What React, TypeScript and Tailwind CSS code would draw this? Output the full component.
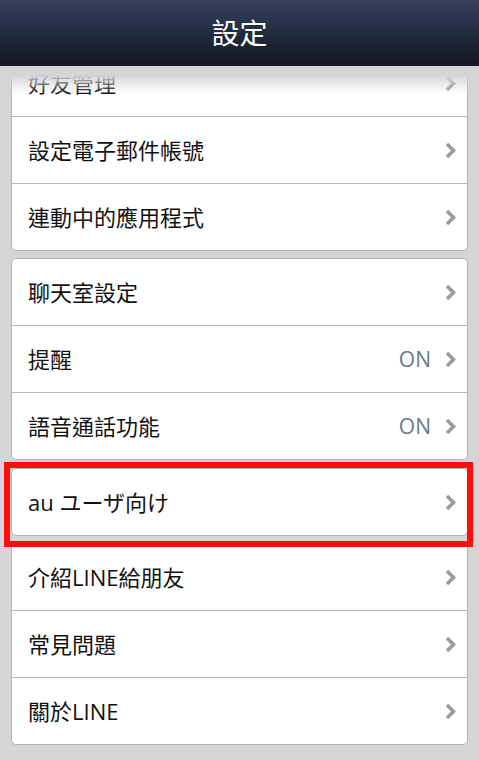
import React from "react";

type Row = { label: string; value?: string };

const font = { fontFamily: '"Open Sans", "Noto Sans CJK TC", sans-serif' };

function Chevron() {
  return (
    <svg width="11" height="17" viewBox="0 0 11 17" className="shrink-0">
      <polyline points="2,2 8.5,8.5 2,15" fill="none" stroke="#9c9c9c" strokeWidth="3.6" />
    </svg>
  );
}

function Card({ rows, className = "" }: { rows: Row[]; className?: string }) {
  return (
    <div className={`mx-[11px] rounded-[5px] border border-[#b3b3b3] bg-white ${className}`}>
      {rows.map((r, i) => (
        <div
          key={r.label}
          className={`flex items-center pl-[16px] pr-[11px] ${i > 0 ? "h-[67px] border-t border-[#b9b9b9]" : "h-[66px]"}`}
        >
          <span className="text-[22px] leading-none text-[#111]">{r.label}</span>
          {r.value && <span className="ml-auto mr-[14px] text-[21px] leading-none text-[#6b7888]">{r.value}</span>}
          <span className={r.value ? "" : "ml-auto"}>
            <Chevron />
          </span>
        </div>
      ))}
    </div>
  );
}

export default function App() {
  return (
    <div className="flex h-[760px] w-[479px] flex-col overflow-hidden bg-[#d5d4d7]" style={font}>
      <header className="flex h-[66px] shrink-0 items-center justify-center bg-[linear-gradient(to_bottom,#34425a_0%,#27334a_35%,#1a2130_70%,#141923_100%)]">
        <span className="text-[28px] leading-none text-white">設定</span>
      </header>

      <div className="relative flex-1 overflow-hidden">
        <div className="-mt-[17px] pb-4">
          <Card
            rows={[{ label: "好友管理" }, { label: "設定電子郵件帳號" }, { label: "連動中的應用程式" }]}
          />
          <Card
            className="mt-[7px]"
            rows={[{ label: "聊天室設定" }, { label: "提醒", value: "ON" }, { label: "語音通話功能", value: "ON" }]}
          />
          <div className="relative mt-[8px]">
            <Card rows={[{ label: "au ユーザ向け" }]} />
            <div className="pointer-events-none absolute -top-[6px] -bottom-[11px] left-[4px] right-[6px] z-10 border-[6px] border-[#ff0d0d]" />
          </div>
          <Card
            className="mt-[7px]"
            rows={[{ label: "介紹LINE給朋友" }, { label: "常見問題" }, { label: "關於LINE" }]}
          />
        </div>
        <div className="pointer-events-none absolute inset-x-0 top-0 h-[28px] bg-[linear-gradient(to_bottom,#d5d4d7_0px,#d5d4d7_9px,rgba(213,212,215,0.55)_17px,rgba(213,212,215,0)_28px)]" />
      </div>
    </div>
  );
}
